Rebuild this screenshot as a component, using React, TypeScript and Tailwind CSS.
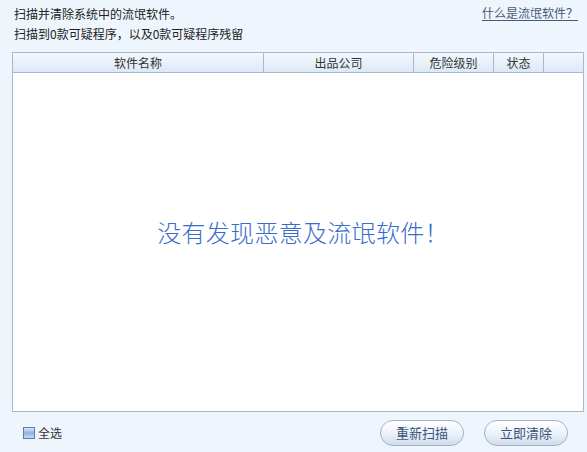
export default function App() {
  const font = { fontFamily: '"Noto Sans CJK SC", "Liberation Sans", sans-serif' };
  return (
    <div className="w-[587px] h-[452px] bg-[#eef5fd] text-[12px] text-[#222] relative flex flex-col" style={font}>
      <div className="flex justify-between items-start pl-[14px] pr-[9px] pt-[4px] h-[24px]">
        <span className="leading-[20px]">扫描并清除系统中的流氓软件。</span>
        <a className="leading-[18px] text-[#4a5a78] underline underline-offset-2">什么是流氓软件？</a>
      </div>
      <div className="pl-[14px] leading-[20px] h-[24px]">扫描到0款可疑程序，以及0款可疑程序残留</div>
      <div className="ml-[12px] mr-[3px] mt-[4px] h-[360px] border border-[#a9b8cc] bg-white flex flex-col">
        <div className="flex h-[20px] border-b border-[#a9b8cc] bg-gradient-to-b from-[#f4f8fd] to-[#dde8f6] leading-[19px] text-[#333]">
          <div className="w-[251px] text-center border-r border-[#a9b8cc]">软件名称</div>
          <div className="w-[150px] text-center border-r border-[#a9b8cc]">出品公司</div>
          <div className="w-[80px] text-center border-r border-[#a9b8cc]">危险级别</div>
          <div className="w-[50px] text-center border-r border-[#a9b8cc]">状态</div>
          <div className="flex-1"></div>
        </div>
        <div className="flex-1 flex items-center justify-center pb-[20px] pl-[10px]">
          <span className="text-[#3a6ccc] text-[24px] tracking-[0.3px] font-light">没有发现恶意及流氓软件！</span>
        </div>
      </div>
      <div className="flex items-center justify-between pl-[23px] pr-[19px] mt-[8px]">
        <div className="flex items-center gap-[3px]">
          <div className="w-[12px] h-[12px] border border-[#5b7fae] bg-gradient-to-b from-[#dbe7f6] via-[#8fb2e0] to-[#c8dbf3]"></div>
          <span className="text-[#333]">全选</span>
        </div>
        <div className="flex gap-[20px]">
          <button className="w-[84px] h-[26px] rounded-full border border-[#9fb2cc] bg-gradient-to-b from-[#ffffff] via-[#eef3fa] to-[#cfdcec] text-[#3a5478] text-[13px] shadow-[inset_0_1px_0_#fff]">重新扫描</button>
          <button className="w-[84px] h-[26px] rounded-full border border-[#9fb2cc] bg-gradient-to-b from-[#ffffff] via-[#eef3fa] to-[#cfdcec] text-[#3a5478] text-[13px] shadow-[inset_0_1px_0_#fff]">立即清除</button>
        </div>
      </div>
    </div>
  );
}
